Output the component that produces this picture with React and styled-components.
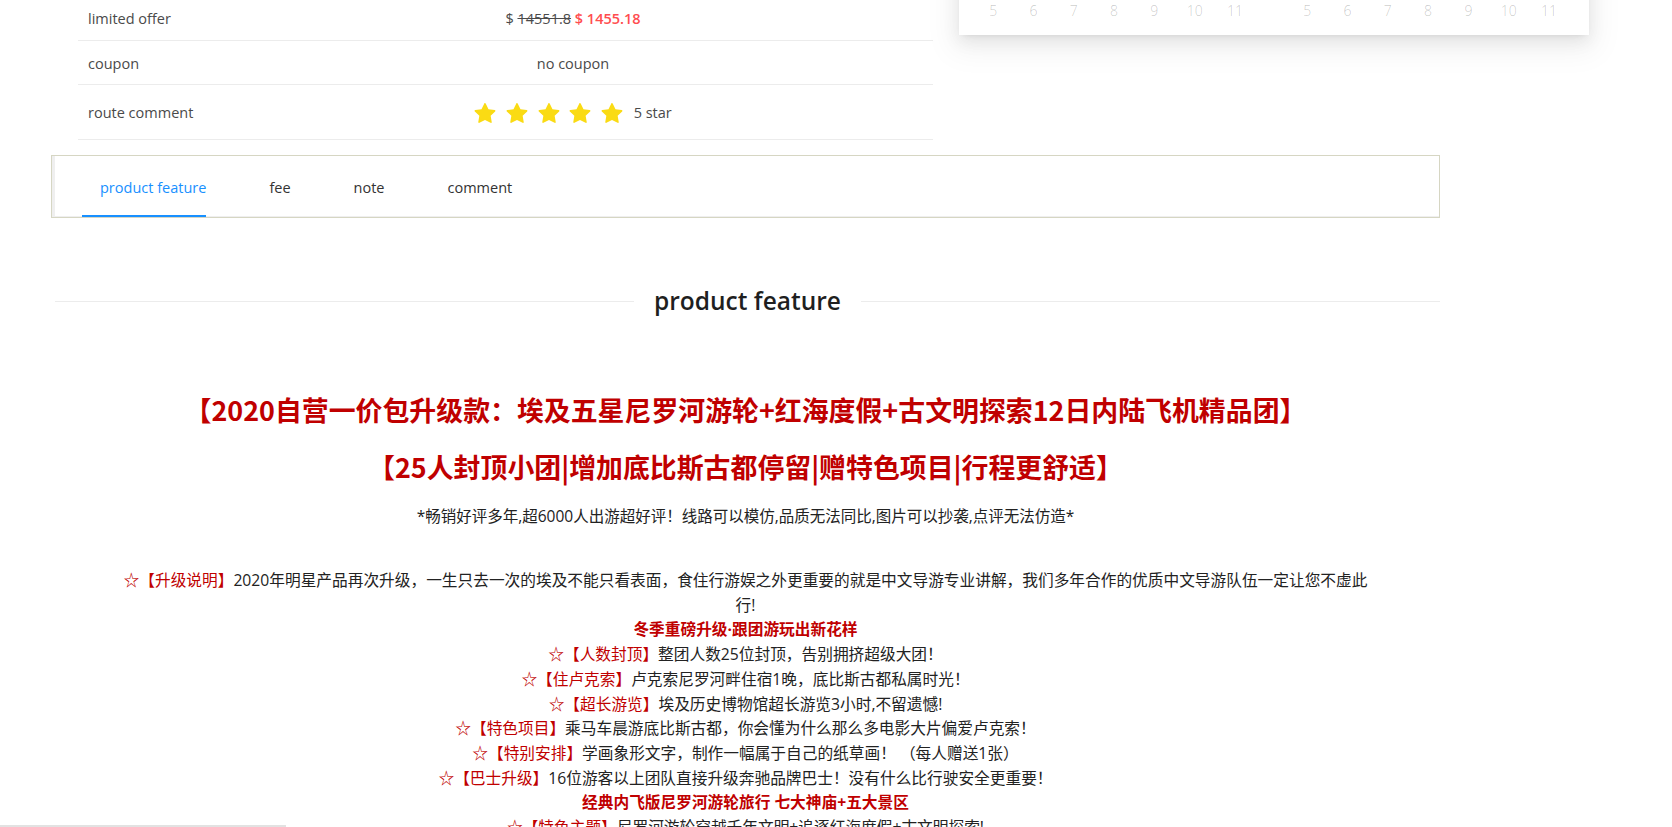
import React from "react";
import styled, { createGlobalStyle } from "styled-components";

const GlobalStyle = createGlobalStyle`
  html, body {
    margin: 0;
    padding: 0;
    background: #fff;
    overflow: hidden;
  }
  body {
    font-family: "Open Sans", "Noto Sans CJK SC", sans-serif;
    color: #333;
  }
`;

const rows = [
  { label: "limited offer", height: 45, kind: "price" },
  { label: "coupon", height: 44, kind: "coupon" },
  { label: "route comment", height: 55, kind: "rate" },
];

const tabs = ["product feature", "fee", "note", "comment"];

const points = [
  { tag: "人数封顶", text: "整团人数25位封顶，告别拥挤超级大团！" },
  { tag: "住卢克索", text: "卢克索尼罗河畔住宿1晚，底比斯古都私属时光！" },
  { tag: "超长游览", text: "埃及历史博物馆超长游览3小时,不留遗憾!" },
  { tag: "特色项目", text: "乘马车晨游底比斯古都，你会懂为什么那么多电影大片偏爱卢克索！" },
  { tag: "特别安排", text: "学画象形文字，制作一幅属于自己的纸草画！ （每人赠送1张）" },
  { tag: "巴士升级", text: "16位游客以上团队直接升级奔驰品牌巴士！没有什么比行驶安全更重要！" },
];

const days = [5, 6, 7, 8, 9, 10, 11];

const Star = () => (
  <svg width="22" height="22" viewBox="64 64 896 896" fill="#fadb14">
    <path d="M908.1 353.1l-253.9-36.9L540.7 86.1c-3.1-6.3-8.2-11.4-14.5-14.5-15.8-7.8-35-1.3-42.9 14.5L369.8 316.2l-253.9 36.9c-7 1-13.4 4.3-18.3 9.3a32.05 32.05 0 00.6 45.3l183.7 179.1-43.4 252.9a31.95 31.95 0 0046.4 33.7L512 754l227.1 119.4c6.2 3.3 13.4 4.4 20.3 3.2 17.4-3 29.1-19.5 26.1-36.9l-43.4-252.9 183.7-179.1c5-4.9 8.3-11.3 9.3-18.3 2.7-17.5-9.5-33.7-26.9-36.3z" />
  </svg>
);

const renderValue = (kind) => {
  if (kind === "price") {
    return (
      <span>
        $ <OldPrice>14551.8</OldPrice> <NewPrice>$ 1455.18</NewPrice>
      </span>
    );
  }
  if (kind === "coupon") return <span>no coupon</span>;
  return (
    <RateBox>
      {[0, 1, 2, 3, 4].map((i) => (
        <Star key={i} />
      ))}
      <RateText>5 star</RateText>
    </RateBox>
  );
};

const App = () => {
  return (
    <Root>
      <GlobalStyle />
      <Page>
        <InfoTable>
          {rows.map((r) => (
            <Row key={r.label} $h={r.height}>
              <Label>{r.label}</Label>
              <Value>{renderValue(r.kind)}</Value>
            </Row>
          ))}
        </InfoTable>

        <TabBox>
          {tabs.map((t, i) => (
            <Tab key={t} $active={i === 0}>
              {t}
            </Tab>
          ))}
        </TabBox>

        <DividerRow>
          <DividerLine />
          <DividerTitle>product feature</DividerTitle>
          <DividerLine />
        </DividerRow>

        <Content>
          <Title $top={74}>
            【2020自营一价包升级款：埃及五星尼罗河游轮+红海度假+古文明探索12日内陆飞机精品团】
          </Title>
          <Title $top={21}>【25人封顶小团|增加底比斯古都停留|赠特色项目|行程更舒适】</Title>
          <Slogan>*畅销好评多年,超6000人出游超好评！线路可以模仿,品质无法同比,图片可以抄袭,点评无法仿造*</Slogan>

          <Feature>
            <Line>
              <Tag>☆【升级说明】</Tag>
              2020年明星产品再次升级，一生只去一次的埃及不能只看表面，食住行游娱之外更重要的就是中文导游专业讲解，我们多年合作的优质中文导游队伍一定让您不虚此行!
            </Line>
            <Highlight>冬季重磅升级·跟团游玩出新花样</Highlight>
            {points.map((p) => (
              <Line key={p.tag}>
                <Tag>☆【{p.tag}】</Tag>
                {p.text}
              </Line>
            ))}
            <Highlight>经典内飞版尼罗河游轮旅行 七大神庙+五大景区</Highlight>
            <Line>
              <Tag>☆【特色主题】</Tag>
              尼罗河游轮穿越千年文明+追逐红海度假+古文明探索!
            </Line>
          </Feature>
        </Content>
      </Page>

      <PickerDropdown>
        {[0, 1].map((m) => (
          <DayRow key={m}>
            {days.map((d) => (
              <Day key={d}>{d}</Day>
            ))}
          </DayRow>
        ))}
      </PickerDropdown>

      <ScrollThumb />
    </Root>
  );
};
export default App;

const Root = styled.div`
  position: relative;
  width: 1672px;
  height: 827px;
  overflow: hidden;
`;

const Page = styled.div`
  width: 1389px;
  margin-left: 51px;
  margin-top: -4px;
`;

const InfoTable = styled.div`
  margin-left: 27px;
  width: 855px;
  font-size: 14.5px;
  color: #4a4a4a;
`;

const Row = styled.div`
  box-sizing: border-box;
  display: grid;
  grid-template-columns: 135px 1fr;
  align-items: center;
  height: ${(p) => p.$h}px;
  padding-top: 1px;
  border-bottom: 1px solid #ececec;
`;

const Label = styled.div`
  padding-left: 10px;
`;

const Value = styled.div`
  display: flex;
  justify-content: center;
  align-items: center;
`;

const OldPrice = styled.span`
  text-decoration: line-through;
`;

const NewPrice = styled.span`
  color: #ff4d4f;
  font-weight: 600;
`;

const RateBox = styled.div`
  display: flex;
  align-items: center;
  gap: 9.7px;
  padding-top: 2px;
`;

const RateText = styled.span`
  margin-left: 1px;
  margin-top: -3px;
`;

const TabBox = styled.div`
  box-sizing: border-box;
  margin-top: 15px;
  height: 63px;
  display: flex;
  align-items: stretch;
  gap: 63px;
  padding: 1px 0 0 48px;
  border: 1px solid #d6d6c3;
  box-shadow: inset 3px 0 0 #efefef, inset 0 -1px 0 #efefef;
`;

const Tab = styled.div`
  position: relative;
  display: flex;
  align-items: center;
  font-size: 14.5px;
  color: ${(p) => (p.$active ? "#1890ff" : "#333")};

  &::after {
    content: "";
    display: ${(p) => (p.$active ? "block" : "none")};
    position: absolute;
    left: -18px;
    right: 0;
    bottom: 0;
    height: 2px;
    background: #1890ff;
  }
`;

const DividerRow = styled.div`
  display: flex;
  align-items: center;
  gap: 20px;
  margin: 66px 0 0 4px;
`;

const DividerLine = styled.div`
  flex: 1;
  height: 1px;
  background: #ececec;
`;

const DividerTitle = styled.div`
  font-size: 24.5px;
  font-weight: 600;
  line-height: 34px;
  color: #1f1f1f;
`;

const Content = styled.div`
  text-align: center;
`;

const Title = styled.h2`
  margin: ${(p) => p.$top}px 0 0;
  font-family: "Noto Sans CJK SC", sans-serif;
  font-size: 26.9px;
  line-height: 36px;
  font-weight: 700;
  color: #c00000;
`;

const Slogan = styled.p`
  margin: 19px 0 0;
  font-size: 15.5px;
  line-height: 24px;
  color: #222;
`;

const Feature = styled.div`
  max-width: 1250px;
  margin: 40px auto 0;
  font-size: 15.7px;
  line-height: 24.7px;
  color: #222;
`;

const Line = styled.p`
  margin: 0;
`;

const Tag = styled.span`
  color: #c00000;
`;

const Highlight = styled.p`
  margin: 0;
  color: #c00000;
  font-weight: 700;
`;

const PickerDropdown = styled.div`
  position: absolute;
  left: 959px;
  top: -40px;
  box-sizing: border-box;
  width: 630px;
  height: 75px;
  display: flex;
  align-items: flex-end;
  gap: 32px;
  padding: 0 20px 12px 14px;
  background: #fff;
  box-shadow: 0 3px 6px -4px rgba(0, 0, 0, 0.12), 0 6px 16px 0 rgba(0, 0, 0, 0.08),
    0 9px 28px 8px rgba(0, 0, 0, 0.05);
`;

const DayRow = styled.div`
  display: grid;
  grid-template-columns: repeat(7, 40.3px);
`;

const Day = styled.div`
  text-align: center;
  line-height: 24px;
  font-size: 14px;
  font-weight: 300;
  color: rgba(0, 0, 0, 0.22);
`;

const ScrollThumb = styled.div`
  position: absolute;
  left: 0;
  bottom: 0;
  width: 286px;
  height: 2px;
  background: #e2e2e2;
`;
